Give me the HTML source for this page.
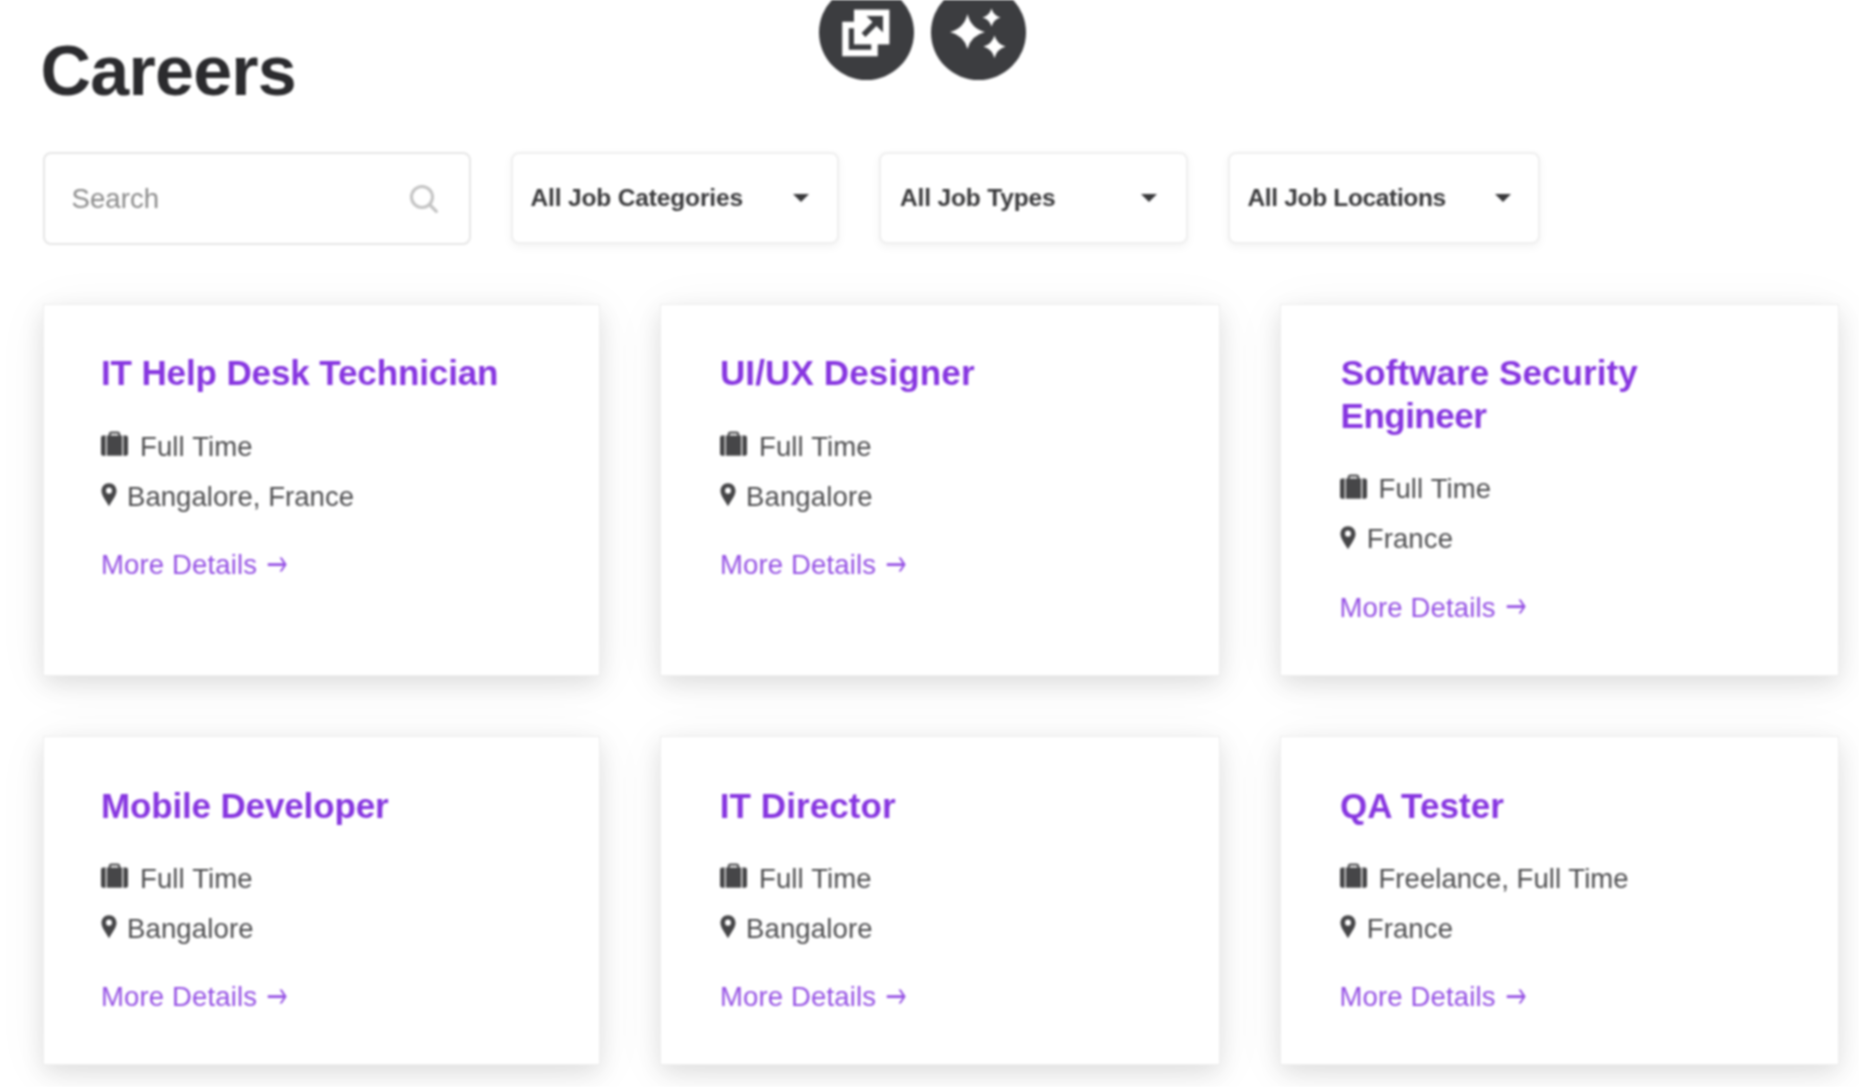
<!DOCTYPE html>
<html lang="en">
<head>
<meta charset="utf-8">
<title>Careers</title>
<style>
*{box-sizing:border-box;margin:0;padding:0}
html{width:1859px;height:1087px;overflow:hidden;background:#fff}
body{width:1859px;height:1087px;background:#fff}
body{font-family:"Liberation Sans",Arial,sans-serif;position:relative;color:#444;filter:blur(0.8px)}
.abs{position:absolute}
h1{position:absolute;left:40.500px;top:33px;font-size:70px;line-height:76px;font-weight:700;color:#2b2b2e;letter-spacing:-0.750px;white-space:nowrap}
.circle{position:absolute;width:95px;height:95px;border-radius:50%;background:#3c3d40;top:-15px}
.circle svg{position:absolute;left:0;top:0}
.search{position:absolute;left:42.500px;top:152px;width:428.500px;height:93px;border:2px solid #e6e6e6;border-radius:8px;background:#fff}
.search span{position:absolute;left:27px;top:29.500px;font-size:27.500px;line-height:30px;color:#8a8a8a;letter-spacing:0.100px}
.search svg{position:absolute;left:363.500px;top:28.500px}
.dd{position:absolute;top:152px;height:92px;border:2px solid #efefef;border-radius:8px;background:#fff;box-shadow:0 3px 10px rgba(0,0,0,0.05)}
.dd span{position:absolute;left:18px;top:29.200px;font-size:24.500px;line-height:30px;font-weight:700;color:#3a3a3c;white-space:nowrap;letter-spacing:-0.150px}
.dd i{position:absolute;top:40.200px;width:0;height:0;border-left:8px solid transparent;border-right:8px solid transparent;border-top:8.500px solid #38383a}
.card{position:absolute;background:#fff;border:1px solid #eeeeee;box-shadow:0 8px 22px rgba(0,0,0,0.10),0 6px 50px rgba(0,0,0,0.05)}
.card h2{position:absolute;left:57px;top:47px;font-size:35px;line-height:42.500px;font-weight:700;color:#8736e0;white-space:nowrap;letter-spacing:-0.050px}
.card .row{position:absolute;left:58px;font-size:27.500px;line-height:30px;color:#4e4e50;white-space:nowrap}
.card h2 span{display:block}
.card .row svg{position:absolute;left:0;top:0}
.card .row span{position:absolute;top:-0.300px;letter-spacing:0.140px}
.card a{position:absolute;left:57px;font-size:27.500px;line-height:30px;color:#9550e4;text-decoration:none;white-space:nowrap;letter-spacing:0.140px}
.card a b{font-family:"IPAGothic","DejaVu Sans",sans-serif;font-weight:400;font-size:28px;line-height:30px;letter-spacing:0;position:absolute;top:-1.500px;left:162px;display:block;transform:scale(0.77,1.4);transform-origin:50% 50%}
</style>
</head>
<body>
<h1>Careers</h1>

<div class="circle" style="left:819px">
<svg width="95" height="95" viewBox="0 0 95 95">
<rect x="26.5" y="40" width="29" height="28" fill="none" stroke="#fff" stroke-width="6.5"/>
<rect x="35" y="24.600" width="35.400" height="34.800" fill="#fff"/>
<path d="M44.500 50 L60 34.500" stroke="#3c3d40" stroke-width="5.400" fill="none"/>
<path d="M47.500 31 H64 V47.500 Z" fill="#3c3d40"/>
</svg>
</div>
<div class="circle" style="left:931px">
<svg width="95" height="95" viewBox="0 0 95 95">
<path d="M36.500 29 Q40 43.500 54 47 Q40 50.500 36.500 64 Q33 50.500 19 47 Q33 43.500 36.500 29Z" fill="#fff"/>
<path d="M60.500 23.500 Q62.500 30.500 69.500 32.500 Q62.500 34.500 60.500 41.500 Q58.500 34.500 51.500 32.500 Q58.500 30.500 60.500 23.500Z" fill="#fff"/>
<path d="M63.500 50.500 Q66 59 74.500 61.500 Q66 64 63.500 73 Q61 64 52.500 61.500 Q61 59 63.500 50.500Z" fill="#fff"/>
</svg>
</div>

<div class="search"><span>Search</span>
<svg width="34" height="34" viewBox="0 0 34 34"><circle cx="14" cy="14" r="10.500" fill="none" stroke="#c4c4c4" stroke-width="3.100"/><path d="M22 22 L28.300 28.300" stroke="#c4c4c4" stroke-width="3.300" stroke-linecap="round"/></svg>
</div>

<div class="dd" style="left:510.500px;width:328.500px"><span>All Job Categories</span><i style="left:280.500px"></i></div>
<div class="dd" style="left:879px;width:308.500px"><span style="left:19px">All Job Types</span><i style="left:260px"></i></div>
<div class="dd" style="left:1227.500px;width:312.500px"><span style="letter-spacing:-0.340px">All Job Locations</span><i style="left:265.500px"></i></div>

<!-- cards inserted below -->
<!--CARDS-->
<div class="card" style="left:43px;top:304px;width:556.5px;height:371.6px">
<h2 style="left:57.4px;top:47.2px"><span style="letter-spacing:-0.11px;margin-left:-0.5px">IT Help Desk Technician</span></h2>
<div class="row" style="top:127.0px;left:57px"><svg width="27" height="25" viewBox="0 0 27 25" style="top:-0.800px"><path d="M8.800 5 V3.400 Q8.800 1.700 10.500 1.700 H16.500 Q18.200 1.700 18.200 3.400 V5" fill="none" stroke="#555557" stroke-width="2.200"/><path d="M2 4.500 H4.700 V24.700 H2 Q0 24.700 0 22.700 V6.500 Q0 4.500 2 4.500Z" fill="#464648"/><rect x="5.900" y="4.500" width="15.200" height="20.200" fill="#464648"/><path d="M22.300 4.500 H25 Q27 4.500 27 6.500 V22.700 Q27 24.700 25 24.700 H22.300Z" fill="#464648"/></svg><span style="left:39px;letter-spacing:0.14px">Full Time</span></div>
<div class="row" style="top:177.0px;left:57px"><svg width="16" height="23.500" viewBox="0 0 17 24" preserveAspectRatio="none" style="top:1px"><path fill-rule="evenodd" d="M8.500 0.300 C13.200 0.300 16.500 3.700 16.500 8.200 C16.500 12.600 11.600 18.600 8.500 23.700 C5.400 18.600 0.500 12.600 0.500 8.200 C0.500 3.700 3.800 0.300 8.500 0.300Z M8.500 4.700 A3.100 3.100 0 1 0 8.500 10.900 A3.100 3.100 0 1 0 8.500 4.700Z" fill="#464648"/></svg><span style="left:26px;letter-spacing:0.05px">Bangalore, France</span></div>
<a style="top:245.0px;left:57px">More Details <b>&rarr;</b></a>
</div>
<div class="card" style="left:660px;top:304px;width:559.5px;height:371.6px">
<h2 style="left:59.4px;top:47.2px"><span style="letter-spacing:0.14px;margin-left:-0.5px">UI/UX Designer</span></h2>
<div class="row" style="top:127.0px;left:59px"><svg width="27" height="25" viewBox="0 0 27 25" style="top:-0.800px"><path d="M8.800 5 V3.400 Q8.800 1.700 10.500 1.700 H16.500 Q18.200 1.700 18.200 3.400 V5" fill="none" stroke="#555557" stroke-width="2.200"/><path d="M2 4.500 H4.700 V24.700 H2 Q0 24.700 0 22.700 V6.500 Q0 4.500 2 4.500Z" fill="#464648"/><rect x="5.900" y="4.500" width="15.200" height="20.200" fill="#464648"/><path d="M22.300 4.500 H25 Q27 4.500 27 6.500 V22.700 Q27 24.700 25 24.700 H22.300Z" fill="#464648"/></svg><span style="left:39px;letter-spacing:0.14px">Full Time</span></div>
<div class="row" style="top:177.0px;left:59px"><svg width="16" height="23.500" viewBox="0 0 17 24" preserveAspectRatio="none" style="top:1px"><path fill-rule="evenodd" d="M8.500 0.300 C13.200 0.300 16.500 3.700 16.500 8.200 C16.500 12.600 11.600 18.600 8.500 23.700 C5.400 18.600 0.500 12.600 0.500 8.200 C0.500 3.700 3.800 0.300 8.500 0.300Z M8.500 4.700 A3.100 3.100 0 1 0 8.500 10.900 A3.100 3.100 0 1 0 8.500 4.700Z" fill="#464648"/></svg><span style="left:26px;letter-spacing:0.14px">Bangalore</span></div>
<a style="top:245.0px;left:59px">More Details <b>&rarr;</b></a>
</div>
<div class="card" style="left:1280px;top:304px;width:558.5px;height:371.6px">
<h2 style="left:58.9px;top:47.2px"><span style="letter-spacing:0.08px;margin-left:0.9px">Software Security</span><span style="letter-spacing:-0.51px;margin-left:0.7px">Engineer</span></h2>
<div class="row" style="top:169.5px;left:58.5px"><svg width="27" height="25" viewBox="0 0 27 25" style="top:-0.800px"><path d="M8.800 5 V3.400 Q8.800 1.700 10.500 1.700 H16.500 Q18.200 1.700 18.200 3.400 V5" fill="none" stroke="#555557" stroke-width="2.200"/><path d="M2 4.500 H4.700 V24.700 H2 Q0 24.700 0 22.700 V6.500 Q0 4.500 2 4.500Z" fill="#464648"/><rect x="5.900" y="4.500" width="15.200" height="20.200" fill="#464648"/><path d="M22.300 4.500 H25 Q27 4.500 27 6.500 V22.700 Q27 24.700 25 24.700 H22.300Z" fill="#464648"/></svg><span style="left:39px;letter-spacing:0.14px">Full Time</span></div>
<div class="row" style="top:219.5px;left:58.5px"><svg width="16" height="23.500" viewBox="0 0 17 24" preserveAspectRatio="none" style="top:1px"><path fill-rule="evenodd" d="M8.500 0.300 C13.200 0.300 16.500 3.700 16.500 8.200 C16.500 12.600 11.600 18.600 8.500 23.700 C5.400 18.600 0.500 12.600 0.500 8.200 C0.500 3.700 3.800 0.300 8.500 0.300Z M8.500 4.700 A3.100 3.100 0 1 0 8.500 10.900 A3.100 3.100 0 1 0 8.500 4.700Z" fill="#464648"/></svg><span style="left:27.2px;letter-spacing:0.14px">France</span></div>
<a style="top:287.5px;left:58.5px">More Details <b>&rarr;</b></a>
</div>
<div class="card" style="left:43px;top:736px;width:556.5px;height:328.6px">
<h2 style="left:57.4px;top:48.3px"><span style="letter-spacing:-0.14px;margin-left:-0.5px">Mobile Developer</span></h2>
<div class="row" style="top:127.0px;left:57px"><svg width="27" height="25" viewBox="0 0 27 25" style="top:-0.800px"><path d="M8.800 5 V3.400 Q8.800 1.700 10.500 1.700 H16.500 Q18.200 1.700 18.200 3.400 V5" fill="none" stroke="#555557" stroke-width="2.200"/><path d="M2 4.500 H4.700 V24.700 H2 Q0 24.700 0 22.700 V6.500 Q0 4.500 2 4.500Z" fill="#464648"/><rect x="5.900" y="4.500" width="15.200" height="20.200" fill="#464648"/><path d="M22.300 4.500 H25 Q27 4.500 27 6.500 V22.700 Q27 24.700 25 24.700 H22.300Z" fill="#464648"/></svg><span style="left:39px;letter-spacing:0.14px">Full Time</span></div>
<div class="row" style="top:177.0px;left:57px"><svg width="16" height="23.500" viewBox="0 0 17 24" preserveAspectRatio="none" style="top:1px"><path fill-rule="evenodd" d="M8.500 0.300 C13.200 0.300 16.500 3.700 16.500 8.200 C16.500 12.600 11.600 18.600 8.500 23.700 C5.400 18.600 0.500 12.600 0.500 8.200 C0.500 3.700 3.800 0.300 8.500 0.300Z M8.500 4.700 A3.100 3.100 0 1 0 8.500 10.900 A3.100 3.100 0 1 0 8.500 4.700Z" fill="#464648"/></svg><span style="left:26px;letter-spacing:0.14px">Bangalore</span></div>
<a style="top:245.0px;left:57px">More Details <b>&rarr;</b></a>
</div>
<div class="card" style="left:660px;top:736px;width:559.5px;height:328.6px">
<h2 style="left:59.4px;top:48.3px"><span style="letter-spacing:0.08px;margin-left:-0.7px">IT Director</span></h2>
<div class="row" style="top:127.0px;left:59px"><svg width="27" height="25" viewBox="0 0 27 25" style="top:-0.800px"><path d="M8.800 5 V3.400 Q8.800 1.700 10.500 1.700 H16.500 Q18.200 1.700 18.200 3.400 V5" fill="none" stroke="#555557" stroke-width="2.200"/><path d="M2 4.500 H4.700 V24.700 H2 Q0 24.700 0 22.700 V6.500 Q0 4.500 2 4.500Z" fill="#464648"/><rect x="5.900" y="4.500" width="15.200" height="20.200" fill="#464648"/><path d="M22.300 4.500 H25 Q27 4.500 27 6.500 V22.700 Q27 24.700 25 24.700 H22.300Z" fill="#464648"/></svg><span style="left:39px;letter-spacing:0.14px">Full Time</span></div>
<div class="row" style="top:177.0px;left:59px"><svg width="16" height="23.500" viewBox="0 0 17 24" preserveAspectRatio="none" style="top:1px"><path fill-rule="evenodd" d="M8.500 0.300 C13.200 0.300 16.500 3.700 16.500 8.200 C16.500 12.600 11.600 18.600 8.500 23.700 C5.400 18.600 0.500 12.600 0.500 8.200 C0.500 3.700 3.800 0.300 8.500 0.300Z M8.500 4.700 A3.100 3.100 0 1 0 8.500 10.900 A3.100 3.100 0 1 0 8.500 4.700Z" fill="#464648"/></svg><span style="left:26px;letter-spacing:0.14px">Bangalore</span></div>
<a style="top:245.0px;left:59px">More Details <b>&rarr;</b></a>
</div>
<div class="card" style="left:1280px;top:736px;width:558.5px;height:328.6px">
<h2 style="left:58.9px;top:48.3px"><span style="letter-spacing:0.04px;margin-left:0.2px">QA Tester</span></h2>
<div class="row" style="top:127.0px;left:58.5px"><svg width="27" height="25" viewBox="0 0 27 25" style="top:-0.800px"><path d="M8.800 5 V3.400 Q8.800 1.700 10.500 1.700 H16.500 Q18.200 1.700 18.200 3.400 V5" fill="none" stroke="#555557" stroke-width="2.200"/><path d="M2 4.500 H4.700 V24.700 H2 Q0 24.700 0 22.700 V6.500 Q0 4.500 2 4.500Z" fill="#464648"/><rect x="5.900" y="4.500" width="15.200" height="20.200" fill="#464648"/><path d="M22.300 4.500 H25 Q27 4.500 27 6.500 V22.700 Q27 24.700 25 24.700 H22.300Z" fill="#464648"/></svg><span style="left:39px;letter-spacing:0.05px">Freelance, Full Time</span></div>
<div class="row" style="top:177.0px;left:58.5px"><svg width="16" height="23.500" viewBox="0 0 17 24" preserveAspectRatio="none" style="top:1px"><path fill-rule="evenodd" d="M8.500 0.300 C13.200 0.300 16.500 3.700 16.500 8.200 C16.500 12.600 11.600 18.600 8.500 23.700 C5.400 18.600 0.500 12.600 0.500 8.200 C0.500 3.700 3.800 0.300 8.500 0.300Z M8.500 4.700 A3.100 3.100 0 1 0 8.500 10.900 A3.100 3.100 0 1 0 8.500 4.700Z" fill="#464648"/></svg><span style="left:27.2px;letter-spacing:0.14px">France</span></div>
<a style="top:245.0px;left:58.5px">More Details <b>&rarr;</b></a>
</div>
<!--ENDCARDS-->
</body>
</html>
